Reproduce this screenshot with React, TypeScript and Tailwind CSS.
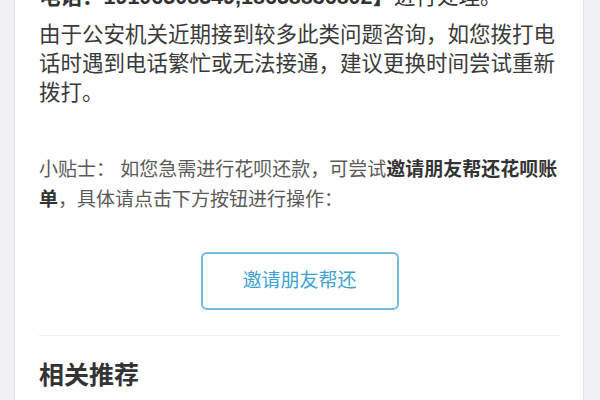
import React from "react";

const font = {
  fontFamily: '"Liberation Sans", "Noto Sans CJK SC", sans-serif',
};

export default function App() {
  return (
    <div
      className="w-[600px] h-[400px] overflow-hidden bg-[#f0f0f5] pl-[14px] pr-[16px]"
      style={font}
    >
      <div className="h-full flex flex-col bg-white border-x border-[#e3e3e9] pl-[24px] pr-[23px]">
        <p className="-mt-[17px] text-[21.5px] leading-[29px] text-[#333]">
          <span className="font-bold">电话：19106508549,18658836802】</span>
          进行处理。
        </p>
        <p className="mt-[9px] text-[21.5px] leading-[29px] text-[#3a3a3a]">
          由于公安机关近期接到较多此类问题咨询，如您拨打电话时遇到电话繁忙或无法接通，建议更换时间尝试重新拨打。
        </p>
        <p className="mt-[47px] text-[19px] leading-[30px] text-[#5a5a5a]">
          小贴士： 如您急需进行花呗还款，可尝试
          <span className="font-bold text-[#333]">邀请朋友帮还花呗账单</span>
          ，具体请点击下方按钮进行操作：
        </p>
        <div className="mt-[37px] flex justify-center">
          <button className="w-[198px] h-[58px] rounded-[6px] border-2 border-[#72bcda] bg-white text-[19px] text-[#3ea2d3]">
            邀请朋友帮还
          </button>
        </div>
        <div className="mt-[25px] h-px shrink-0 bg-[#ececec]" />
        <h2 className="mt-[22px] text-[25px] leading-[34px] font-bold text-[#333]">
          相关推荐
        </h2>
      </div>
    </div>
  );
}
